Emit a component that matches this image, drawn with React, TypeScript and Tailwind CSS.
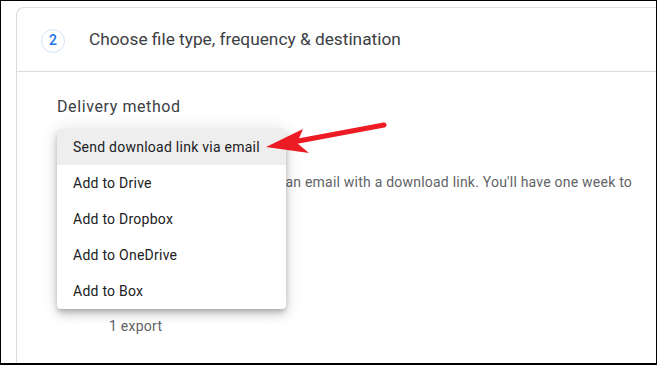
import React from "react";

const options = [
  "Send download link via email",
  "Add to Drive",
  "Add to Dropbox",
  "Add to OneDrive",
  "Add to Box",
];

export default function App() {
  return (
    <div
      className="relative w-[657px] h-[365px] overflow-hidden bg-white border-t border-l border-r border-b-2 border-black"
      style={{ fontFamily: "Roboto, 'Liberation Sans', sans-serif" }}
    >
      <div className="ml-[15px] mt-[6px] w-[700px] h-[400px] border-l border-t border-[#dadce0] rounded-tl-lg">
        {/* Step header */}
        <div className="h-[64px] flex items-center border-b border-[#dadce0] pl-[24px]">
          <div className="w-[24px] h-[24px] mt-[2px] rounded-full border border-[#d2e3fc] flex items-center justify-center text-[14px] font-medium text-[#1a73e8]">
            2
          </div>
          <div className="ml-[24px] text-[17.3px] text-[#3c4043]">
            Choose file type, frequency &amp; destination
          </div>
        </div>

        {/* Body */}
        <div className="pl-[40px] pt-[23px]">
          <div className="text-[16px] tracking-[0.6px] leading-[24px] text-[#3c4043]">Delivery method</div>

          <div className="relative h-[36px] mt-[10px]">
            {/* Open menu over the select */}
            <div className="absolute left-0 top-0 z-10 w-[229px] bg-white rounded-[4px] shadow-[0_3px_5px_-1px_rgba(0,0,0,0.2),0_6px_10px_0_rgba(0,0,0,0.14),0_1px_18px_0_rgba(0,0,0,0.12)]">
              {options.map((o, i) => (
                <div
                  key={o}
                  className={`h-[36px] flex items-center pl-[16px] text-[14px] tracking-[0.25px] text-[#202124] ${
                    i === 0 ? "bg-[#eeeeee] rounded-t-[4px]" : ""
                  }`}
                >
                  {o}
                </div>
              ))}
            </div>
          </div>

          <p className="w-[590px] mt-[7px] text-[14px] tracking-[0.22px] leading-[20px] text-[#5f6368]">
            When your files are ready, you'll get an email with a download link. You'll have one
            week to download your files.
          </p>

          <div className="mt-[104px] pl-[52px] text-[14px] tracking-[0.25px] leading-[20px] text-[#5f6368]">1 export</div>
        </div>
      </div>

      {/* Red arrow annotation */}
      <svg
        className="absolute left-0 top-0 z-20 pointer-events-none"
        width="657"
        height="365"
        viewBox="0 0 657 365"
      >
        <line x1="383" y1="124" x2="292" y2="141" stroke="#ed1c24" strokeWidth="5" strokeLinecap="round" />
        <polygon points="265,146 302,128 296,142 308,152" fill="#ed1c24" />
      </svg>
    </div>
  );
}
